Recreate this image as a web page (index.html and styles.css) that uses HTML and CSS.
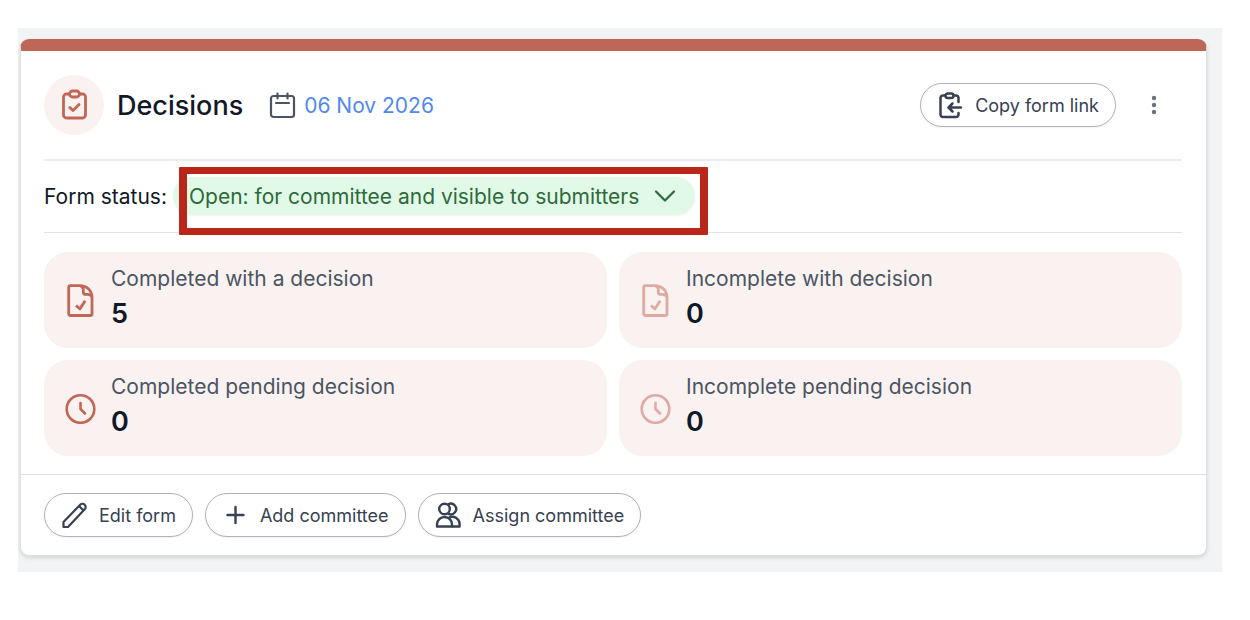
FILE: index.html
```html
<!DOCTYPE html>
<html lang="en">
<head>
  <meta charset="UTF-8">
  <meta name="viewport" content="width=device-width, initial-scale=1.0">
  <title>Decisions</title>
  <link rel="stylesheet" href="styles.css">
</head>
<body>
  <main class="page">
    <section class="card">
      <header class="card-header">
        <span class="badge">
          <svg width="30" height="34" viewBox="0 0 30 34" fill="none" stroke="currentColor" stroke-width="2.8" stroke-linecap="round" stroke-linejoin="round">
            <path d="M10 6H7.500a3 3 0 0 0-3 3v18a3 3 0 0 0 3 3h16a3 3 0 0 0 3-3V9a3 3 0 0 0-3-3H21"/>
            <rect x="10.500" y="3" width="10" height="6" rx="3"/>
            <path d="M10.800 19.500l3.200 3 6-6"/>
          </svg>
        </span>
        <h1>Decisions</h1>
        <div class="date">
          <svg width="28" height="28" viewBox="0 0 28 28" fill="none" stroke="currentColor" stroke-width="2.200" stroke-linecap="round" stroke-linejoin="round">
            <rect x="2" y="5" width="23" height="21" rx="2.500"/>
            <path d="M8.500 2.500v5M18.500 2.500v5M7 12h13"/>
          </svg>
          <a href="#">06 Nov 2026</a>
        </div>
        <div class="header-actions">
          <button type="button" class="btn">
            <svg width="26" height="28" viewBox="0 0 26 28" fill="none" stroke="currentColor" stroke-width="2.500" stroke-linecap="round" stroke-linejoin="round">
              <path d="M8 4.500H6A2.500 2.500 0 0 0 3.500 7v16.500A2.500 2.500 0 0 0 6 26H19a2.500 2.500 0 0 0 2.500-2.500V22M16.500 4.500h2.500A2.500 2.500 0 0 1 21.500 7v4"/>
              <rect x="8.500" y="2.500" width="8" height="4.500" rx="2.200"/>
              <path d="M24 16.500H12M15.500 12.500l-4 4 4 4"/>
            </svg>
            Copy form link
          </button>
          <button type="button" class="btn-more" aria-label="More options">
            <svg width="6" height="20" viewBox="0 0 6 20" fill="currentColor">
              <circle cx="3" cy="3" r="2.200"/>
              <circle cx="3" cy="10" r="2.200"/>
              <circle cx="3" cy="17" r="2.200"/>
            </svg>
          </button>
        </div>
      </header>

      <div class="status">
        <label for="status">Form status:</label>
        <div class="status-field">
          <select id="status">
            <option>Open: for committee and visible to submitters</option>
          </select>
          <svg class="chevron" width="22" height="14" viewBox="0 0 22 14" fill="none" stroke="currentColor" stroke-width="2.200" stroke-linecap="round" stroke-linejoin="round">
            <path d="M2 2.500l9 9 9-9"/>
          </svg>
          <span class="highlight"></span>
        </div>
      </div>

      <div class="stats">
        <div class="stat">
          <svg width="32" height="36" viewBox="0 0 32 36" fill="none" stroke="currentColor" stroke-width="2.800" stroke-linejoin="round">
            <path d="M6 3.700H15.500C23 3.700 28 8.500 28 15.500V31.700A1.800 1.800 0 0 1 26.200 33.500H6.500A1.800 1.800 0 0 1 4.700 31.700V5.500A1.800 1.800 0 0 1 6.500 3.700z"/>
            <path d="M16.500 4c2.200.4 2.800 1.500 2.800 3.500v2.400a2.500 2.500 0 0 0 2.500 2.500h1.600c2.800 0 4 .8 4.500 2.800"/>
            <path d="M12 23.500l4 3.300 5.200-8"/>
          </svg>
          <div class="stat-text">
            <p class="stat-label">Completed with a decision</p>
            <p class="stat-value">5</p>
          </div>
        </div>
        <div class="stat stat-faded">
          <svg width="32" height="36" viewBox="0 0 32 36" fill="none" stroke="currentColor" stroke-width="2.800" stroke-linejoin="round">
            <path d="M6 3.700H15.500C23 3.700 28 8.500 28 15.500V31.700A1.800 1.800 0 0 1 26.200 33.500H6.500A1.800 1.800 0 0 1 4.700 31.700V5.500A1.800 1.800 0 0 1 6.500 3.700z"/>
            <path d="M16.500 4c2.200.4 2.800 1.500 2.800 3.500v2.400a2.500 2.500 0 0 0 2.500 2.500h1.600c2.800 0 4 .8 4.500 2.800"/>
            <path d="M12 23.500l4 3.300 5.200-8"/>
          </svg>
          <div class="stat-text">
            <p class="stat-label">Incomplete with decision</p>
            <p class="stat-value">0</p>
          </div>
        </div>
        <div class="stat">
          <svg width="32" height="32" viewBox="0 0 32 32" fill="none" stroke="currentColor" stroke-width="2.600" stroke-linecap="round" stroke-linejoin="round">
            <circle cx="16.500" cy="17" r="13.800"/>
            <path d="M16.500 11v6l4.500 4.500"/>
          </svg>
          <div class="stat-text">
            <p class="stat-label">Completed pending decision</p>
            <p class="stat-value">0</p>
          </div>
        </div>
        <div class="stat stat-faded">
          <svg width="32" height="32" viewBox="0 0 32 32" fill="none" stroke="currentColor" stroke-width="2.600" stroke-linecap="round" stroke-linejoin="round">
            <circle cx="16.500" cy="17" r="13.800"/>
            <path d="M16.500 11v6l4.500 4.500"/>
          </svg>
          <div class="stat-text">
            <p class="stat-label">Incomplete pending decision</p>
            <p class="stat-value">0</p>
          </div>
        </div>
      </div>

      <footer class="card-footer">
        <button type="button" class="btn">
          <svg width="26" height="28" viewBox="0 0 26 28" fill="none" stroke="currentColor" stroke-width="2.200" stroke-linejoin="round">
            <path d="M2.500 26v-5L19.200 3.700a3.100 3.100 0 0 1 4.500 0 3.100 3.100 0 0 1 0 4.500L7 26z"/>
            <path d="M18 5l5 5"/>
          </svg>
          Edit form
        </button>
        <button type="button" class="btn">
          <svg width="26" height="28" viewBox="0 0 26 28" fill="none" stroke="currentColor" stroke-width="2.400" stroke-linecap="round">
            <path d="M13.500 6v16M5.500 14h16"/>
          </svg>
          Add committee
        </button>
        <button type="button" class="btn">
          <svg width="26" height="28" viewBox="0 0 26 28" fill="none" stroke="currentColor" stroke-width="2.400" stroke-linejoin="round">
            <circle cx="9.500" cy="8" r="5.300"/>
            <path d="M13 3.500a5.300 5.300 0 1 1 0 9"/>
            <path d="M2 25.500v-2a7.500 7.500 0 0 1 15 0v2z"/>
            <path d="M14 16.600a7.300 7.300 0 0 1 10.600 6.900v2H17"/>
          </svg>
          Assign committee
        </button>
      </footer>
    </section>
  </main>
</body>
</html>
```

FILE: styles.css
```css
* {
  box-sizing: border-box;
  margin: 0;
  padding: 0;
}
body {
  background-color: #fff;
  padding: 28px 28px 48px 18px;
  color: #111827;
  font-family: Inter, "Liberation Sans", sans-serif;
  font-size: 21px;
}
button, select {
  font-family: inherit;
  cursor: pointer;
}
svg {
  flex: none;
}
.page {
  background-color: #f1f3f5;
  padding: 11px 15px 16px 2px;
}
.card {
  background-color: #fff;
  border: 1px solid #dcdfe4;
  border-top: 12px solid #bf6757;
  border-radius: 9px;
  box-shadow: 0 2px 4px rgba(0, 0, 0, 0.12);
}
/* header */
.card-header {
  display: flex;
  align-items: center;
  margin: 0 24px 0 23px;
  padding: 24px 0;
  border-bottom: 2px solid #ebecef;
}
.badge {
  display: flex;
  align-items: center;
  justify-content: center;
  width: 60px;
  height: 60px;
  border-radius: 50%;
  background-color: #faf2f0;
  color: #c26656;
}
h1 {
  margin-left: 13px;
  font-size: 27px;
  font-weight: 500;
}
.date {
  display: flex;
  align-items: center;
  gap: 7px;
  margin-left: 26px;
  color: #4b5563;
}
.date a {
  color: #5088f2;
  text-decoration: none;
}
.header-actions {
  display: flex;
  align-items: center;
  gap: 10px;
  margin-left: auto;
}
.btn {
  display: flex;
  align-items: center;
  gap: 12px;
  height: 44px;
  padding: 0 16px;
  border: 1px solid #adb2be;
  border-radius: 22px;
  background-color: #fff;
  box-shadow: 0 1px 2px rgba(0, 0, 0, 0.06);
  color: #374151;
  font-size: 18px;
}
.btn-more {
  display: flex;
  align-items: center;
  justify-content: center;
  width: 56px;
  height: 44px;
  border: none;
  background: none;
  color: #6b7280;
}
/* status */
.status {
  display: flex;
  align-items: center;
  gap: 6px;
  margin: 0 24px 0 23px;
  padding: 16px 0 17px;
  border-bottom: 1px solid #dfe2e7;
}
.status-field {
  position: relative;
}
.status select {
  display: block;
  appearance: none;
  height: 38px;
  padding: 0 55px 0 16px;
  border: none;
  border-radius: 19px;
  background-color: #e1fae7;
  box-shadow: 0 1px 2px rgba(0, 0, 0, 0.06);
  color: #2f693a;
  font-size: 21px;
}
.chevron {
  position: absolute;
  top: 12px;
  right: 19px;
  color: #2f693a;
  pointer-events: none;
}
.highlight {
  position: absolute;
  top: -10px;
  right: -13px;
  bottom: -20px;
  left: 6px;
  border: 7px solid #bb261a;
  border-width: 7px 8px;
  border-radius: 1px;
  pointer-events: none;
}
/* stats */
.stats {
  display: grid;
  grid-template-columns: 1fr 1fr;
  gap: 12px;
  padding: 19px 24px 18px 23px;
}
.stat {
  display: flex;
  align-items: center;
  gap: 15px;
  padding-left: 20px;
  border-radius: 24px;
  background-color: #faf2f0;
}
.stat svg {
  color: #c26656;
}
.stat-faded svg {
  opacity: 0.5;
}
.stat-text {
  padding: 10px 0 16px;
}
.stat-label {
  color: #4b5563;
  line-height: 34px;
}
.stat-value {
  font-size: 27px;
  font-weight: 600;
  line-height: 36px;
}
/* footer */
.card-footer {
  display: flex;
  flex-wrap: wrap;
  gap: 12px;
  padding: 18px 23px;
  border-top: 1px solid #dcdfe4;
}
```
